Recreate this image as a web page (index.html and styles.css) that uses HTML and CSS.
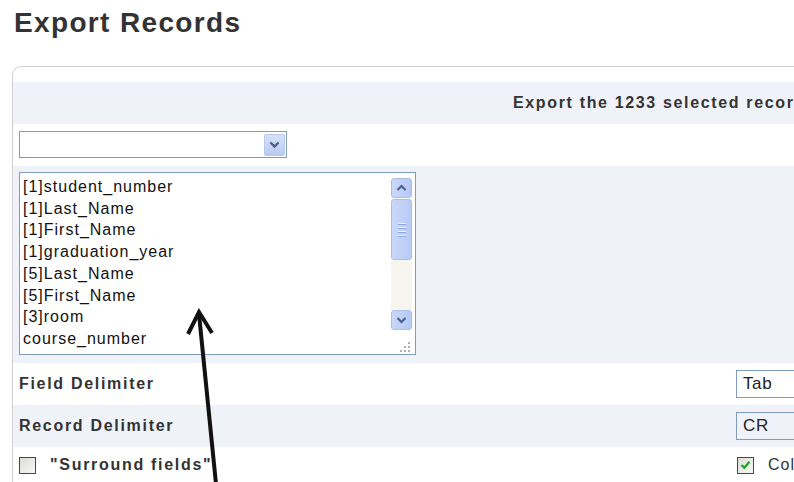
FILE: index.html
```html
<!DOCTYPE html>
<html lang="en">
<head>
  <meta charset="UTF-8" />
  <title>Export Records</title>
  <link rel="stylesheet" href="styles.css">
</head>
<body>
  <h1>Export Records</h1>

  <div class="panel">
    <div class="row band head">Export the 1233 selected records</div>

    <div class="row pick">
      <div class="combo">
        <span class="combo-text"></span>
        <span class="drop">
          <svg width="11" height="8" viewBox="0 0 11 8"><path d="M1.5 1.5 L5.5 5.5 L9.5 1.5" fill="none" stroke="#4a5f8a" stroke-width="2.4"/></svg>
        </span>
      </div>
    </div>

    <div class="row band lists">
      <div class="listbox">
        <div class="items">
          <div>[1]student_number</div>
          <div>[1]Last_Name</div>
          <div>[1]First_Name</div>
          <div>[1]graduation_year</div>
          <div>[5]Last_Name</div>
          <div>[5]First_Name</div>
          <div>[3]room</div>
          <div>course_number</div>
        </div>
        <div class="scroll">
          <div class="sbtn">
            <svg width="11" height="8" viewBox="0 0 11 8"><path d="M1.5 6 L5.5 2 L9.5 6" fill="none" stroke="#4a5f8a" stroke-width="2.2"/></svg>
          </div>
          <div class="thumb"><span></span><span></span><span></span><span></span></div>
          <div class="track"></div>
          <div class="sbtn">
            <svg width="11" height="8" viewBox="0 0 11 8"><path d="M1.5 2 L5.5 6 L9.5 2" fill="none" stroke="#4a5f8a" stroke-width="2.2"/></svg>
          </div>
          <div class="grip">
            <svg width="18" height="18" viewBox="0 0 18 18" fill="#b0b0b0">
              <rect x="14" y="6" width="2" height="2"/>
              <rect x="10" y="10" width="2" height="2"/><rect x="14" y="10" width="2" height="2"/>
              <rect x="6" y="14" width="2" height="2"/><rect x="10" y="14" width="2" height="2"/><rect x="14" y="14" width="2" height="2"/>
            </svg>
          </div>
        </div>
      </div>
    </div>

    <div class="row opt">
      <div class="label">Field Delimiter</div>
      <div class="field">Tab</div>
    </div>

    <div class="row opt band">
      <div class="label">Record Delimiter</div>
      <div class="field">CR</div>
    </div>

    <div class="row opt checks">
      <div class="check-line">
        <span class="box"></span>
        <span class="label">"Surround fields"</span>
      </div>
      <div class="check-line">
        <span class="box">
          <svg width="11" height="10" viewBox="0 0 11 10"><path d="M1.5 5 L4.3 7.8 L9.5 1.8" fill="none" stroke="#22a52a" stroke-width="2.3"/></svg>
        </span>
        <span class="plain">Column titles on 1st row</span>
      </div>
    </div>
  </div>

  <!-- annotation arrow drawn over the form -->
  <svg class="arrow" width="794" height="482" viewBox="0 0 794 482">
    <path d="M216 484 L199 314" stroke="#111" stroke-width="4" fill="none"/>
    <path d="M188 334 L199 312 L212 333" stroke="#111" stroke-width="4" fill="none" stroke-linejoin="miter"/>
  </svg>
</body>
</html>
```

FILE: styles.css
```css
body {
  margin: 0;
  width: 794px;
  height: 482px;
  overflow: hidden;
  position: relative;
  background: #fff;
  font-family: "Liberation Sans", Arial, sans-serif;
  color: #333;
}

h1 {
  margin: 0 0 26px 14px;
  padding-top: 6px;
  font-size: 28px;
  line-height: 34px;
  letter-spacing: 1.35px;
  color: #333;
}

.panel {
  margin-left: 12px;
  width: 1000px;
  padding-top: 15px;
  border: 1px solid #cfcfcf;
  border-right: none;
  border-bottom: none;
  border-radius: 9px 0 0 0;
}

.row {
  padding: 0 6px;
}

.band {
  background: #eff2f9;
}

.head {
  height: 42px;
  line-height: 42px;
  padding-left: 500px;
  font-weight: bold;
  font-size: 16px;
  letter-spacing: 1.65px;
}

.pick {
  height: 42px;
  padding-top: 7px;
  box-sizing: border-box;
}

.combo {
  width: 265px;
  height: 25px;
  border: 1px solid #7f9db9;
  display: flex;
  justify-content: flex-end;
  align-items: center;
  padding-right: 1px;
}

.drop {
  width: 21px;
  height: 22px;
  display: flex;
  align-items: center;
  justify-content: center;
  background: linear-gradient(#d6e1fb, #b9cbf3);
  border: 1px solid #b8c8ee;
  border-radius: 2px;
  box-sizing: border-box;
}

.lists {
  height: 197px;
  padding-top: 6px;
  box-sizing: border-box;
}

.listbox {
  width: 395px;
  height: 181px;
  border: 1px solid #7f9db9;
  background: #fff;
  display: flex;
}

.items {
  flex: 1;
  padding: 3px 0 0 3px;
  font-size: 16px;
  line-height: 21.7px;
  letter-spacing: 1px;
  color: #111;
}

.scroll {
  width: 21px;
  margin-right: 3px;
  padding-top: 5px;
  display: flex;
  flex-direction: column;
}

.sbtn {
  height: 20px;
  display: flex;
  align-items: center;
  justify-content: center;
  background: linear-gradient(90deg, #c9d8fb, #b6c9f4);
  border: 1px solid #a9bde8;
  border-radius: 3px;
  box-sizing: border-box;
}

.thumb {
  height: 61px;
  margin-top: 1px;
  background: linear-gradient(90deg, #c9d8fb, #b8caf4);
  border: 1px solid #a9bde8;
  border-radius: 3px;
  box-sizing: border-box;
  display: flex;
  flex-direction: column;
  align-items: center;
  justify-content: center;
  gap: 2px;
}

.thumb span {
  width: 8px;
  height: 1px;
  background: #eef3ff;
  border-bottom: 1px solid #8da5d8;
}

.track {
  flex: 1;
  background: #f6f5ee;
}

.grip {
  height: 24px;
  display: flex;
  align-items: flex-end;
  justify-content: flex-end;
}

.opt {
  height: 42px;
  display: grid;
  grid-template-columns: 717px 1fr;
  align-items: center;
}

.opt:first-of-type {
  height: 43px;
}

.label {
  font-weight: bold;
  font-size: 16px;
  letter-spacing: 1.7px;
}

.field {
  width: 120px;
  height: 26px;
  border: 1px solid #7f9db9;
  padding-left: 6px;
  font-size: 17px;
  line-height: 26px;
  letter-spacing: 0.6px;
  color: #222;
}

.checks {
  align-items: start;
  padding-top: 9px;
  box-sizing: border-box;
}

.check-line {
  display: flex;
  align-items: center;
  gap: 14px;
}

.check-line:last-child {
  margin-left: 1px;
}

.box {
  width: 17px;
  height: 17px;
  border: 1px solid #1f4f7e;
  background: linear-gradient(135deg, #dcdcd7, #f7f7f5);
  box-sizing: border-box;
  display: flex;
  align-items: center;
  justify-content: center;
}

.plain {
  font-size: 16px;
  letter-spacing: 1px;
  white-space: nowrap;
}

.arrow {
  position: absolute;
  left: 0;
  top: 0;
  pointer-events: none;
}
```
